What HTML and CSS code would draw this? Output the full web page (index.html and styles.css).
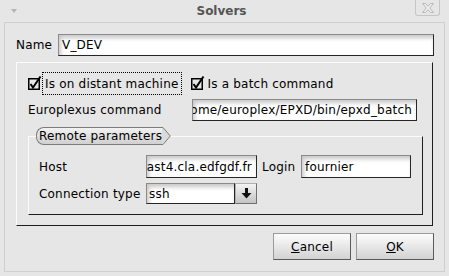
FILE: index.html
```html
<!DOCTYPE html>
<html lang="en">
<head>
<meta charset="utf-8">
<title>Solvers</title>
<link rel="stylesheet" href="styles.css">
</head>
<body>
<div class="window">
    <div class="titlebar">
        <span class="menu-arrow"></span>
        <span class="title">Solvers</span>
        <span class="close">
            <svg width="12" height="10" viewBox="0 0 12 10">
                <path d="M0.5 0.5 H3.5 L6 3.2 L8.5 0.5 H11.5 L7.8 5 L11.5 9.5 H8.5 L6 6.8 L3.5 9.5 H0.5 L4.2 5 Z" fill="#ececec" stroke="#b9b9b9" stroke-width="1"/>
            </svg>
        </span>
    </div>
    <div class="dialog">
        <div class="row name-row">
            <span class="lbl name-lbl">Name</span>
            <div class="entry name-entry">V_DEV</div>
        </div>
        <div class="panel">
            <div class="row check-row">
                <svg class="check" width="14" height="16" viewBox="0 0 14 16">
                    <rect x="0.75" y="3.75" width="10.5" height="10.5" fill="none" stroke="#000" stroke-width="1.5"/>
                    <path d="M2.5 9 L5 12.5 L12.5 1.5" fill="none" stroke="#000" stroke-width="2"/>
                </svg>
                <span class="check-label focus">Is on distant machine</span>
                <svg class="check second" width="14" height="16" viewBox="0 0 14 16">
                    <rect x="0.75" y="3.75" width="10.5" height="10.5" fill="none" stroke="#000" stroke-width="1.5"/>
                    <path d="M2.5 9 L5 12.5 L12.5 1.5" fill="none" stroke="#000" stroke-width="2"/>
                </svg>
                <span class="check-label">Is a batch command</span>
            </div>
            <div class="row cmd-row">
                <span class="lbl cmd-lbl">Europlexus command</span>
                <div class="entry cmd-entry scrolled"><span>/home/europlex/EPXD/bin/epxd_batch</span></div>
            </div>
            <div class="remote">
                <div class="tab">
                    <span class="tab-body">Remote parameters</span>
                    <svg class="tab-tip" width="9" height="18" viewBox="0 0 9 18">
                        <path d="M0 0.5 H1 L8.3 9 L1 17.5 H0" fill="#dadada" stroke="#7c7c7c" stroke-width="1"/>
                    </svg>
                </div>
                <div class="row host-row">
                    <span class="lbl host-lbl">Host</span>
                    <div class="entry host-entry scrolled"><span>ast4.cla.edfgdf.fr</span></div>
                    <span class="lbl login-lbl">Login</span>
                    <div class="entry login-entry">fournier</div>
                </div>
                <div class="row conn-row">
                    <span class="lbl host-lbl">Connection type</span>
                    <div class="combo">
                        <div class="entry combo-entry">ssh</div>
                        <span class="combo-btn">
                            <svg width="11" height="11" viewBox="0 0 11 11">
                                <path d="M4 0 H7 V5 H10.5 L5.5 10.5 L0.5 5 H4 Z" fill="#111"/>
                            </svg>
                        </span>
                    </div>
                </div>
            </div>
        </div>
        <div class="buttons">
            <span class="btn"><u>C</u>ancel</span>
            <span class="btn"><u>O</u>K</span>
        </div>
    </div>
</div>
</body>
</html>
```

FILE: styles.css
```css
body
{
    margin: 0;
    background: #e6e6e6;
    font-family: "DejaVu Sans", sans-serif;
    font-size: 12px;
    letter-spacing: 0.2px;
    color: #000;
}
.window
{
    width: 449px;
    height: 276px;
}
.titlebar
{
    height: 22px;
    display: flex;
    align-items: center;
}
.menu-arrow
{
    width: 0;
    height: 0;
    margin-left: 11px;
    margin-top: -1px;
    border-left: 3px solid transparent;
    border-right: 3px solid transparent;
    border-top: 4px solid #b4b4b4;
}
.title
{
    flex: 1;
    padding-left: 11px;
    text-align: center;
    font-weight: bold;
    letter-spacing: 0;
    color: #555;
}
.close
{
    align-self: flex-start;
    width: 25px;
    height: 16px;
    margin-right: 9px;
    box-sizing: border-box;
    border: 1px solid #c6c6c6;
    border-top: none;
    border-radius: 0 0 3px 3px;
    display: flex;
    align-items: center;
    justify-content: center;
}
.dialog
{
    margin-left: 4px;
    width: 441px;
    height: 250px;
    box-sizing: border-box;
    border: 1px solid #cfcfcf;
    padding: 11px 10px 0 11px;
}
.row
{
    display: flex;
    align-items: center;
}
.lbl
{
    flex: none;
    white-space: nowrap;
}
.name-row
{
    height: 22px;
}
.name-lbl
{
    width: 42px;
}
.entry
{
    flex: 1;
    min-width: 0;
    height: 100%;
    box-sizing: border-box;
    display: flex;
    align-items: center;
    padding: 0 3px;
    overflow: hidden;
    white-space: nowrap;
    background: #fff;
    border: 1px solid;
    border-color: #8a8a8a #262626 #262626 #8a8a8a;
    box-shadow: inset 2px 3px 4px rgba(0, 0, 0, 0.22);
}
.scrolled
{
    justify-content: flex-end;
    padding-right: 4px;
}
.scrolled span
{
    flex: none;
}
.panel
{
    margin-top: 6px;
    width: 417px;
    box-sizing: border-box;
    border: 1px solid;
    border-color: #fbfbfb #1e1e1e #1e1e1e #fbfbfb;
    padding: 9px 0 10px 11px;
}
.check-row
{
    height: 23px;
}
.check
{
    flex: none;
    overflow: visible;
    margin-top: -1px;
}
.check.second
{
    margin-left: 9px;
}
.check-label
{
    height: 23px;
    box-sizing: border-box;
    display: flex;
    align-items: center;
    padding: 0 2px;
    border: 1px solid transparent;
}
.check-label.focus
{
    border: 1px dotted #000;
}
.cmd-row
{
    margin-top: 4px;
    height: 22px;
}
.cmd-lbl
{
    width: 164px;
}
.cmd-entry
{
    flex: none;
    width: 225px;
}
.remote
{
    margin-top: 15px;
    width: 395px;
    box-sizing: border-box;
    border: 1px solid;
    border-color: #fbfbfb #1e1e1e #1e1e1e #fbfbfb;
    padding: 0 0 10px 10px;
}
.tab
{
    display: flex;
    margin-top: -10px;
    margin-left: -3px;
    height: 18px;
}
.tab-body
{
    height: 18px;
    box-sizing: border-box;
    padding: 0 0 0 2px;
    line-height: 16px;
    border: 1px solid #7c7c7c;
    border-right: none;
    border-radius: 8px 0 0 8px;
    background: linear-gradient(#f2f2f2, #d0d0d0);
}
.tab-tip
{
    flex: none;
}
.host-row
{
    margin-top: 10px;
    height: 23px;
}
.host-lbl
{
    width: 107px;
}
.host-entry
{
    flex: none;
    width: 111px;
}
.login-lbl
{
    width: 39px;
    margin-left: 5px;
}
.login-entry
{
    flex: none;
    width: 110px;
}
.conn-row
{
    margin-top: 5px;
    height: 21px;
}
.combo
{
    display: flex;
    width: 111px;
    height: 21px;
}
.combo-entry
{
    padding-left: 2px;
}
.combo-btn
{
    flex: none;
    width: 22px;
    height: 21px;
    box-sizing: border-box;
    display: flex;
    align-items: center;
    justify-content: center;
    border: 1px solid;
    border-color: #b0b0b0 #707070 #707070 #b0b0b0;
    background: linear-gradient(#f4f4f4, #c4c4c4);
}
.buttons
{
    margin-top: 7px;
    display: flex;
    justify-content: flex-end;
    gap: 5px;
}
.btn
{
    width: 78px;
    height: 27px;
    box-sizing: border-box;
    display: flex;
    align-items: center;
    justify-content: center;
    border: 1px solid;
    border-color: #9a9a9a #5a5a5a #5a5a5a #9a9a9a;
    background: linear-gradient(#fdfdfd, #d2d2d2);
}
.btn u
{
    text-decoration-thickness: 1px;
}
```
